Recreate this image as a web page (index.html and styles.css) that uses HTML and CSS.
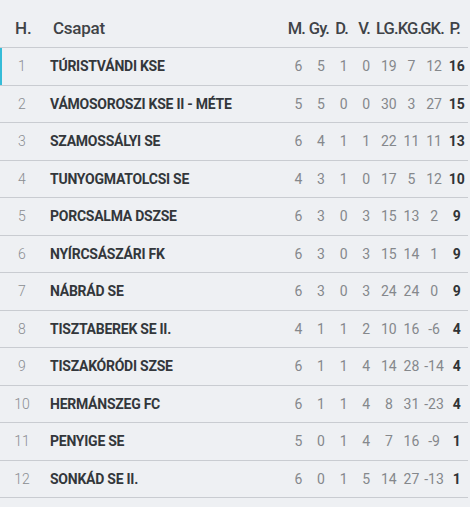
FILE: index.html
```html
<!DOCTYPE html>
<html lang="hu">
<head>
<meta charset="utf-8">
<title>Tabella</title>
<link rel="stylesheet" href="styles.css">
</head>
<body>
<div class="table">
  <div class="row head">
    <div class="c rank">H.</div>
    <div class="c team">Csapat</div>
    <div class="c n">M.</div>
    <div class="c n">Gy.</div>
    <div class="c n">D.</div>
    <div class="c n">V.</div>
    <div class="c n">LG.</div>
    <div class="c n">KG.</div>
    <div class="c n">GK.</div>
    <div class="c n">P.</div>
  </div>
  <div class="row active">
    <div class="c rank">1</div><div class="c team">TÚRISTVÁNDI KSE</div>
    <div class="c n">6</div><div class="c n">5</div><div class="c n">1</div><div class="c n">0</div><div class="c n">19</div><div class="c n">7</div><div class="c n">12</div><div class="c n pts">16</div>
  </div>
  <div class="row">
    <div class="c rank">2</div><div class="c team">VÁMOSOROSZI KSE II - MÉTE</div>
    <div class="c n">5</div><div class="c n">5</div><div class="c n">0</div><div class="c n">0</div><div class="c n">30</div><div class="c n">3</div><div class="c n">27</div><div class="c n pts">15</div>
  </div>
  <div class="row">
    <div class="c rank">3</div><div class="c team">SZAMOSSÁLYI SE</div>
    <div class="c n">6</div><div class="c n">4</div><div class="c n">1</div><div class="c n">1</div><div class="c n">22</div><div class="c n">11</div><div class="c n">11</div><div class="c n pts">13</div>
  </div>
  <div class="row">
    <div class="c rank">4</div><div class="c team">TUNYOGMATOLCSI SE</div>
    <div class="c n">4</div><div class="c n">3</div><div class="c n">1</div><div class="c n">0</div><div class="c n">17</div><div class="c n">5</div><div class="c n">12</div><div class="c n pts">10</div>
  </div>
  <div class="row">
    <div class="c rank">5</div><div class="c team">PORCSALMA DSZSE</div>
    <div class="c n">6</div><div class="c n">3</div><div class="c n">0</div><div class="c n">3</div><div class="c n">15</div><div class="c n">13</div><div class="c n">2</div><div class="c n pts">9</div>
  </div>
  <div class="row">
    <div class="c rank">6</div><div class="c team">NYÍRCSÁSZÁRI FK</div>
    <div class="c n">6</div><div class="c n">3</div><div class="c n">0</div><div class="c n">3</div><div class="c n">15</div><div class="c n">14</div><div class="c n">1</div><div class="c n pts">9</div>
  </div>
  <div class="row">
    <div class="c rank">7</div><div class="c team">NÁBRÁD SE</div>
    <div class="c n">6</div><div class="c n">3</div><div class="c n">0</div><div class="c n">3</div><div class="c n">24</div><div class="c n">24</div><div class="c n">0</div><div class="c n pts">9</div>
  </div>
  <div class="row">
    <div class="c rank">8</div><div class="c team">TISZTABEREK SE II.</div>
    <div class="c n">4</div><div class="c n">1</div><div class="c n">1</div><div class="c n">2</div><div class="c n">10</div><div class="c n">16</div><div class="c n">-6</div><div class="c n pts">4</div>
  </div>
  <div class="row">
    <div class="c rank">9</div><div class="c team">TISZAKÓRÓDI SZSE</div>
    <div class="c n">6</div><div class="c n">1</div><div class="c n">1</div><div class="c n">4</div><div class="c n">14</div><div class="c n">28</div><div class="c n">-14</div><div class="c n pts">4</div>
  </div>
  <div class="row">
    <div class="c rank">10</div><div class="c team">HERMÁNSZEG FC</div>
    <div class="c n">6</div><div class="c n">1</div><div class="c n">1</div><div class="c n">4</div><div class="c n">8</div><div class="c n">31</div><div class="c n">-23</div><div class="c n pts">4</div>
  </div>
  <div class="row">
    <div class="c rank">11</div><div class="c team">PENYIGE SE</div>
    <div class="c n">5</div><div class="c n">0</div><div class="c n">1</div><div class="c n">4</div><div class="c n">7</div><div class="c n">16</div><div class="c n">-9</div><div class="c n pts">1</div>
  </div>
  <div class="row">
    <div class="c rank">12</div><div class="c team">SONKÁD SE II.</div>
    <div class="c n">6</div><div class="c n">0</div><div class="c n">1</div><div class="c n">5</div><div class="c n">14</div><div class="c n">27</div><div class="c n">-13</div><div class="c n pts">1</div>
  </div>
</div>
</body>
</html>
```
FILE: styles.css
```css
html, body {
  margin: 0;
  padding: 0;
  background: #eef0f3;
}
body {
  font-family: Roboto, "Liberation Sans", sans-serif;
  width: 470px;
  height: 507px;
  overflow: hidden;
}
.table {
  width: 468px;
}
.row {
  display: grid;
  grid-template-columns: 44px 1fr repeat(8, 22.64px);
  align-items: center;
  height: 37.5px;
  box-sizing: border-box;
  border-bottom: 1px solid #c9ccd1;
}
.row.head {
  height: 48px;
  align-items: end;
  padding-bottom: 9px;
}
.row.active {
  box-shadow: inset 2px 0 0 #35bcd8;
}
.c {
  white-space: nowrap;
}
.head .c {
  font-size: 17px;
  font-weight: 500;
  color: #3f4347;
}
.head .rank {
  text-align: left;
  padding-left: 15px;
}
.head .team {
  padding-left: 9px;
}
.head .n {
  font-size: 16.5px;
  letter-spacing: -0.9px;
  margin-right: 4px;
  display: flex;
  justify-content: center;
}
.rank {
  text-align: center;
  font-size: 14px;
  color: #8a8d91;
  font-weight: 300;
}
.team {
  font-size: 14px;
  font-weight: 700;
  color: #33373b;
  padding-left: 6px;
  letter-spacing: -0.25px;
}
.n {
  text-align: center;
  font-size: 14px;
  color: #85888c;
}
.n.pts {
  font-weight: 700;
  color: #303336;
}
```
